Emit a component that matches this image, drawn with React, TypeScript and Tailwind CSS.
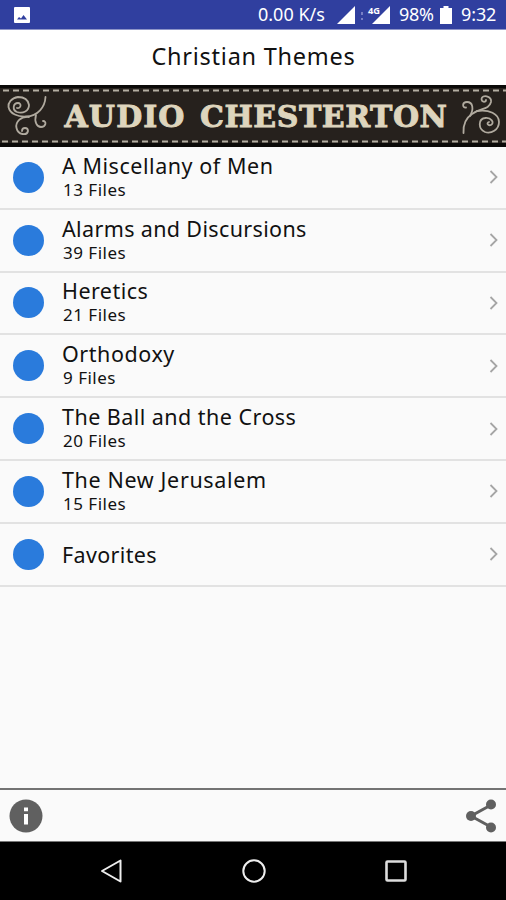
const books = [
  { title: 'A Miscellany of Men', files: 13, tracking: 'tracking-[0.55px]' },
  { title: 'Alarms and Discursions', files: 39, tracking: 'tracking-[0.36px]' },
  { title: 'Heretics', files: 21, tracking: 'tracking-[0.45px]' },
  { title: 'Orthodoxy', files: 9, tracking: 'tracking-[0.55px]' },
  { title: 'The Ball and the Cross', files: 20, tracking: 'tracking-[0.46px]' },
  { title: 'The New Jerusalem', files: 15, tracking: 'tracking-[0.64px]' },
  { title: 'Favorites', tracking: 'tracking-[0.35px]' },
];

const StatusBar = () => (
  <div className="flex h-[30px] shrink-0 items-center border-b border-[#8d94c8] bg-[#303f9f] pl-3.5 pr-[9px] text-[18px] text-white">
    <svg className="h-4 w-4" viewBox="0 0 16 16">
      <rect width="16" height="16" rx="1" fill="#fff" />
      <path d="M3 12.5 5 10l2 1.5L9.5 8l3.5 4.5z" fill="#303f9f" />
    </svg>
    <span className="ml-auto w-[68px] whitespace-nowrap">0.00 K/s</span>
    <svg className="ml-[11px] h-[22px] w-[56px]" viewBox="0 0 56 22">
      <path d="M0 20 18 2v18zM35 20 53 2v18z" fill="#fff" />
      <path d="M25 8v3M25 14v2" stroke="#777fc4" strokeWidth="2" />
      <text x="31" y="10" fill="#fff" fontSize="9" fontWeight="700" stroke="#303f9f" strokeWidth="1.5" paintOrder="stroke" textLength="12" lengthAdjust="spacingAndGlyphs">4G</text>
    </svg>
    <span className="ml-[6px] w-[37px] whitespace-nowrap tracking-[-0.3px]">98%</span>
    <svg className="ml-[4px] mr-[1px] h-[18px] w-3" viewBox="0 0 12 18">
      <path d="M3.5 0h5v2H12v16H0V2h3.5z" fill="#fff" />
    </svg>
    <span className="ml-[8px] w-[36px] whitespace-nowrap tracking-[-0.1px]">9:32</span>
  </div>
);

const Banner = () => (
  <svg className="h-[62px] w-full shrink-0" viewBox="0 0 506 62">
    <rect width="506" height="62" fill="#0b0a09" />
    <rect y="3" width="506" height="55" fill="#26211d" />
    <path d="M3 5.5h503M2 56.5h504" stroke="#b3aea2" strokeWidth="2" strokeDasharray="6 4" />
    <g fill="none" stroke="#b0aa9f" strokeWidth="1.8" strokeLinecap="round">
      <path d="M17 23C21 24 22 18 18 18C13 18 12 25 17 27C23 29 29 26 29 20C28 14 23 12 18 12C11 13 8 18 8.500 22C10 29 18 32 26 31.500C38 31 45 22 45.500 12" />
      <path d="M36 30C34 37 37 42 41 42C46 42 47 36 43 36" />
      <path d="M29 32C21 31 15 37 16.500 43C18 50 27 51 28 46C28 42 22 42 22 46" />
      <path d="M463.500 48C463 40 466 33 472 29C480 23 489 25 491 17C492 11 482 9 481.500 14C482 18 486 17 486 15" />
      <path d="M470 31C474 24 473 17 467 17C462 17 462 23 466 22.500" />
      <path d="M477 26C489 24 499 29 499 37C499 45 491 49 485 47C478 44 478 34 485 33C491 32 495 38 491 40C488 41 486 38 489 37" />
    </g>
    <g fill="#ded5bd" stroke="#ded5bd" strokeWidth="0.9" fontSize="30" fontWeight="700" fontFamily='"DejaVu Serif", serif'>
      <text x="64.5" y="42" textLength="120">AUDIO</text>
      <text x="200" y="42" textLength="247">CHESTERTON</text>
    </g>
  </svg>
);

type BookRowProps = { title: string; files?: number; tracking: string };

const BookRow = ({ title, files, tracking }: BookRowProps) => (
  <li className="flex h-[62.8px] items-center border-b-2 border-[#e2e2e2] pl-[12.5px] pr-[8px]">
    <span className="h-[31px] w-[31px] shrink-0 rounded-full bg-[#2a7bdc]" />
    <div className="ml-[18.5px] flex-1">
      <p className={`text-[21.5px] leading-[25px] ${tracking}`}>{title}</p>
      {files !== undefined && (
        <p className="pl-px text-[17px] leading-[24px] tracking-[0.5px]">{files} Files</p>
      )}
    </div>
    <svg className="h-3.5 w-[9px]" viewBox="0 0 9 14">
      <path d="m1.500 1 6 6-6 6" fill="none" stroke="#a5a5a5" strokeWidth="1.8" />
    </svg>
  </li>
);

const NavBar = () => (
  <nav className="flex h-[58px] shrink-0 items-center bg-black pl-[100px]">
    <svg className="h-6 w-6" viewBox="0 0 24 24">
      <path d="M2 12 20.5 1.5v21z" fill="none" stroke="#eee" strokeWidth="2" strokeLinejoin="round" />
    </svg>
    <svg className="ml-[118px] h-6 w-6" viewBox="0 0 24 24">
      <circle cx="12" cy="12" r="10.7" fill="none" stroke="#eee" strokeWidth="2" />
    </svg>
    <svg className="ml-[118px] h-6 w-6" viewBox="0 0 24 24">
      <rect x="2.5" y="2.5" width="19" height="19" rx="1" fill="none" stroke="#ddd" strokeWidth="2.6" />
    </svg>
  </nav>
);

export default function App() {
  return (
    <div className="flex h-[900px] w-[506px] flex-col overflow-hidden bg-[#fafafa] font-['Noto_Sans',sans-serif] text-[#111]">
      <StatusBar />
      <header className="flex h-[55px] shrink-0 items-center justify-center bg-white pb-px pl-px">
        <h1 className="whitespace-nowrap text-[23.5px] tracking-[0.75px]">Christian Themes</h1>
      </header>
      <Banner />
      <ul className="flex-1">
        {books.map((book) => (
          <BookRow key={book.title} {...book} />
        ))}
      </ul>
      <footer className="flex h-[54px] shrink-0 items-center justify-between border-b border-t-2 border-b-[#777] border-t-[#737373] pl-[9px] pr-[9px]">
        <svg className="h-[34px] w-[34px]" viewBox="0 0 34 34">
          <circle cx="17" cy="17" r="16.5" fill="#606060" />
          <path d="M15 8.5h4v3.8h-4zM15 15h4v10.5h-4z" fill="#fff" />
        </svg>
        <svg className="h-[34px] w-8" viewBox="0 0 32 34">
          <path d="M26 6 6 17l20 11" fill="none" stroke="#606060" strokeWidth="3" />
          <g fill="#606060">
            <circle cx="26" cy="5.5" r="5" />
            <circle cx="6" cy="17" r="5" />
            <circle cx="26" cy="28.5" r="5" />
          </g>
        </svg>
      </footer>
      <NavBar />
    </div>
  );
}
